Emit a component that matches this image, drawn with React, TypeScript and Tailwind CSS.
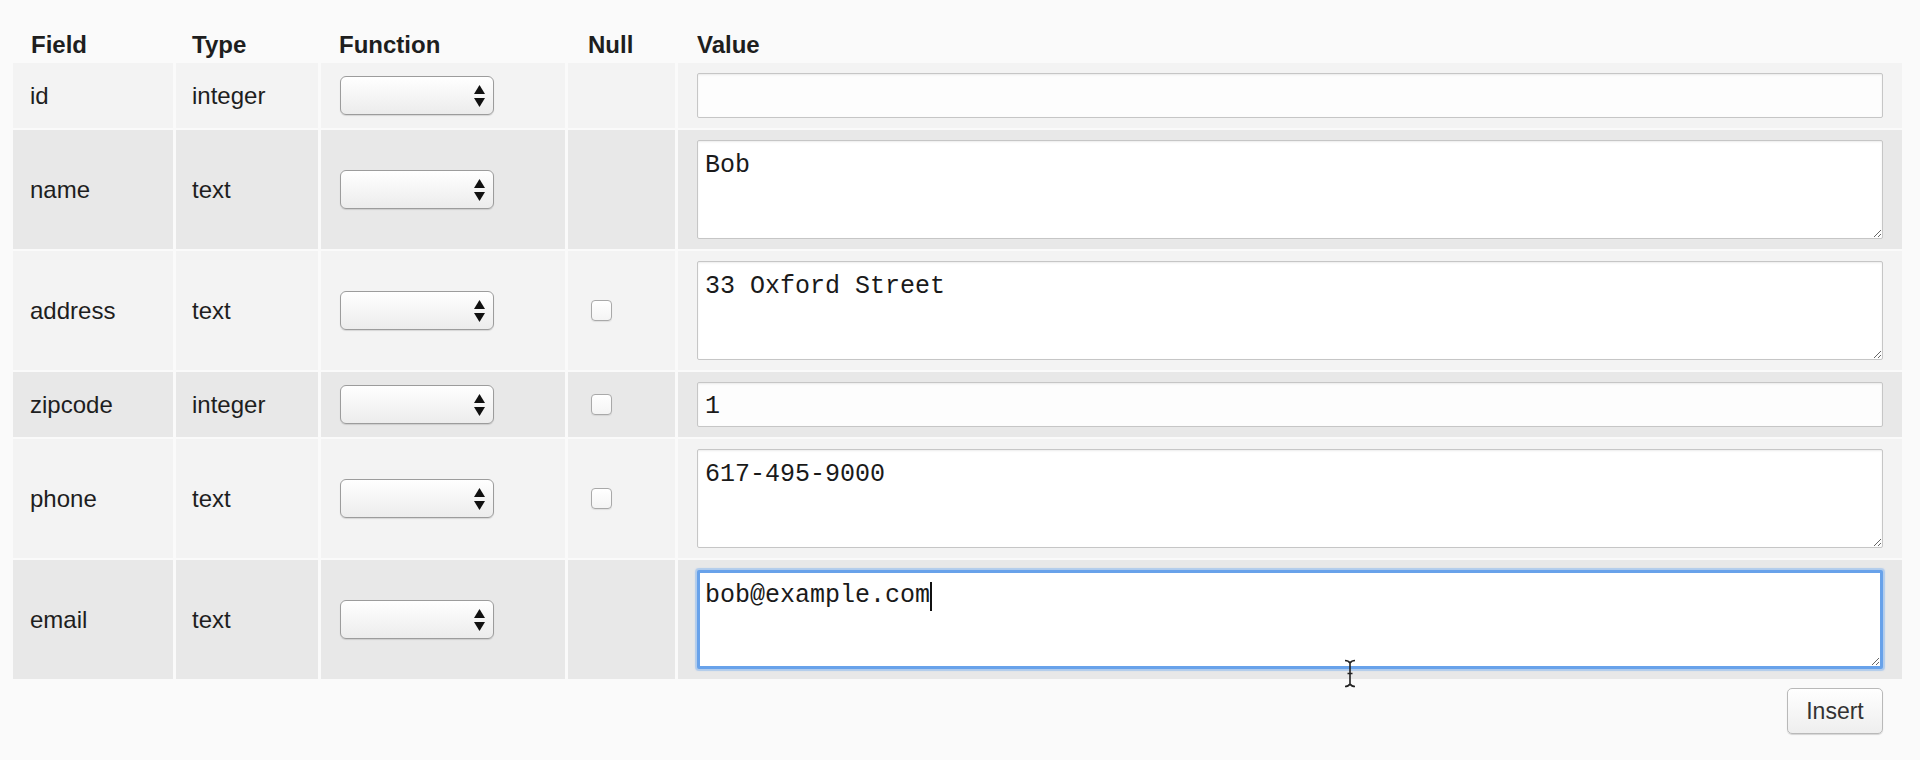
import React from "react";

type Row = {
  field: string;
  type: string;
  nullable: boolean;
  value: string;
  multi: boolean;
  focused?: boolean;
};

const rows: Row[] = [
  { field: "id", type: "integer", nullable: false, value: "", multi: false },
  { field: "name", type: "text", nullable: false, value: "Bob", multi: true },
  { field: "address", type: "text", nullable: true, value: "33 Oxford Street", multi: true },
  { field: "zipcode", type: "integer", nullable: true, value: "1", multi: false },
  { field: "phone", type: "text", nullable: true, value: "617-495-9000", multi: true },
  { field: "email", type: "text", nullable: false, value: "bob@example.com", multi: true, focused: true },
];

function FakeSelect() {
  return (
    <div className="flex h-[39px] w-[154px] items-center justify-end rounded-[6px] border border-[#9c9c9c] bg-gradient-to-b from-white to-[#ececec] pr-[8px] shadow-[0_1px_1px_rgba(0,0,0,0.12)]">
      <svg width="11" height="22" viewBox="0 0 11 22" className="text-[#111]">
        <polygon points="5.5,0 11,9 0,9" fill="currentColor" />
        <polygon points="0,13 11,13 5.5,22" fill="currentColor" />
      </svg>
    </div>
  );
}

export default function App() {
  const sans = "font-['Liberation_Sans',Arial,sans-serif]";
  const mono = "font-['Liberation_Mono','Courier_New',monospace]";

  return (
    <main className={`relative min-h-screen bg-[#fafafa] ${sans} text-[24px] text-[#1e1e1e]`}>
      <div className="w-[1902px] pl-[13px]">
        <div className="grid grid-cols-[160px_142px_244px_107px_1224px] gap-x-[3px] gap-y-[2px]">
          {/* header */}
          <div className="flex h-[61px] items-end pb-[2px] pl-[18px] font-bold leading-[28px]">Field</div>
          <div className="flex h-[61px] items-end pb-[2px] pl-[16px] font-bold leading-[28px]">Type</div>
          <div className="flex h-[61px] items-end pb-[2px] pl-[18px] font-bold leading-[28px]">Function</div>
          <div className="flex h-[61px] items-end pb-[2px] pl-[20px] font-bold leading-[28px]">Null</div>
          <div className="flex h-[61px] items-end pb-[2px] pl-[19px] font-bold leading-[28px]">Value</div>

          {rows.map((r, i) => {
            const bg = i % 2 === 0 ? "bg-[#f3f3f3]" : "bg-[#e8e8e8]";
            return (
              <React.Fragment key={r.field}>
                <div className={`flex items-center pl-[17px] ${bg}`}>{r.field}</div>
                <div className={`flex items-center pl-[16px] ${bg}`}>{r.type}</div>
                <div className={`flex items-center pl-[19px] ${bg}`}>
                  <FakeSelect />
                </div>
                <div className={`flex items-center pl-[23px] ${bg}`}>
                  {r.nullable && (
                    <input
                      type="checkbox"
                      className="h-[21px] w-[21px] appearance-none rounded-[4px] border border-[#a9a9a9] bg-gradient-to-b from-white to-[#f4f4f4] shadow-[0_1px_1px_rgba(0,0,0,0.08)]"
                    />
                  )}
                </div>
                <div className={`py-[10px] pl-[19px] pr-[19px] ${bg}`}>
                  {r.multi ? (
                    <div className="relative">
                      <textarea
                        readOnly
                        defaultValue={r.value}
                        className={`block h-[99px] w-full resize rounded-[2px] bg-white pr-[9px] pb-[7px] text-[25px] leading-[28px] text-[#1a1a1a] outline-none ${mono} ${
                          r.focused
                            ? "border-[3px] border-[#68a2ea] pl-[5px] pt-[9px] shadow-[0_0_1px_2px_rgba(140,185,240,0.6)]"
                            : "border border-[#c6c6c6] pl-[7px] pt-[11px] shadow-[inset_0_1px_2px_rgba(0,0,0,0.08)]"
                        }`}
                      />
                      {r.focused && (
                        <span
                          className={`absolute top-[12px] left-[calc(8px+15ch)] h-[29px] w-[2px] bg-[#111] text-[25px] ${mono}`}
                        />
                      )}
                    </div>
                  ) : (
                    <input
                      readOnly
                      defaultValue={r.value}
                      className={`block h-[45px] w-full rounded-[2px] border border-[#c6c6c6] bg-[#fdfdfd] pl-[7px] pr-[9px] pt-[3px] text-[25px] text-[#1a1a1a] shadow-[inset_0_1px_2px_rgba(0,0,0,0.08)] outline-none ${mono}`}
                    />
                  )}
                </div>
              </React.Fragment>
            );
          })}
        </div>

        <div className="mt-[9px] flex justify-end pr-[19px]">
          <button className="h-[46px] w-[96px] rounded-[5px] border border-[#b9b9b9] bg-gradient-to-b from-white to-[#eeeeee] text-[23px] text-[#333] shadow-[0_1px_1px_rgba(0,0,0,0.15)]">
            Insert
          </button>
        </div>
      </div>

      {/* mouse pointer (I-beam) over the email field */}
      <svg
        className="pointer-events-none absolute left-[1343px] top-[659px]"
        width="14"
        height="29"
        viewBox="0 0 14 29"
      >
        <path
          d="M2 1.5 C5 1.5 6 2.5 7 4 C8 2.5 9 1.5 12 1.5 M7 4 V25 M2 27.5 C5 27.5 6 26.5 7 25 C8 26.5 9 27.5 12 27.5 M4.5 14.5 H9.5"
          fill="none"
          stroke="#222"
          strokeWidth="1.6"
        />
      </svg>
    </main>
  );
}
